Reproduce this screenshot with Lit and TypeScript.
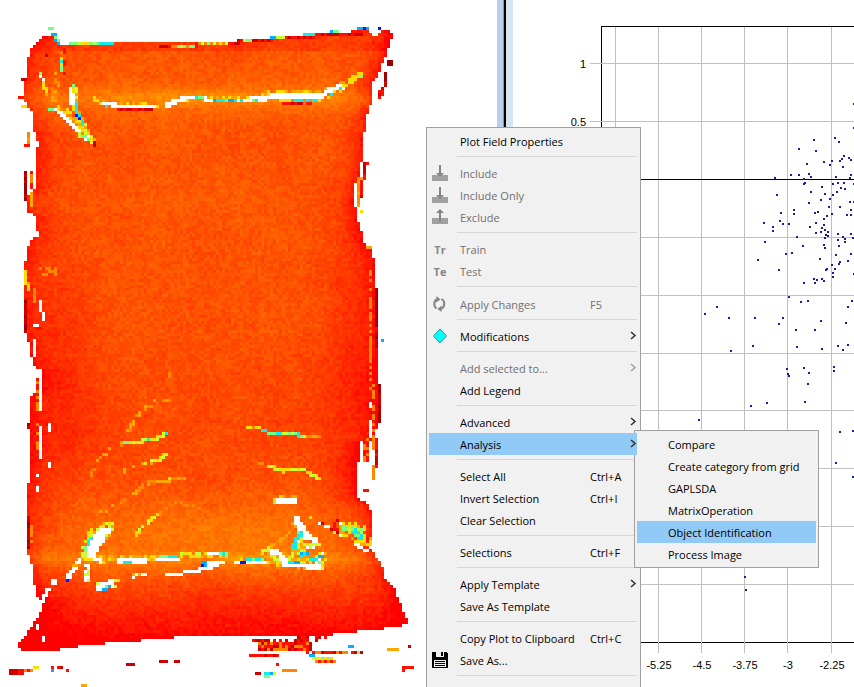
import { LitElement, html, svg, css, nothing } from "lit";
import { customElement } from "lit/decorators.js";
import { classMap } from "lit/directives/class-map.js";

type Point = [number, number];

/* ---------- false-colour image of the bag ---------- */

const CELL = 3;
const COLS = 139;
const ROWS = 226;

const OUTLINE: Point[] = [
  [41, 37], [57, 37], [59, 45], [68, 46], [69, 43], [228, 43], [243, 40], [275, 38], [320, 35], [333, 32],
  [369, 31], [372, 36], [379, 36], [380, 31], [390, 31], [392, 34], [391, 43], [387, 53], [383, 62], [380, 72],
  [373, 83], [372, 100], [368, 110], [365, 128], [363, 143], [363, 153], [362, 165], [358, 178], [354, 186],
  [354, 200], [357, 215], [361, 230], [364, 244], [371, 250], [374, 258], [376, 285], [377, 320], [379, 332],
  [379, 420], [376, 432], [372, 442], [360, 442], [358, 470], [357, 497], [367, 503], [372, 512], [373, 530],
  [368, 545], [376, 556], [382, 565], [385, 578], [394, 588], [400, 603], [406, 617], [411, 621], [401, 627],
  [378, 629], [353, 632], [330, 635], [300, 635], [210, 635], [167, 638], [125, 642], [97, 644], [75, 647],
  [58, 650], [36, 652], [25, 652], [16, 645], [24, 637], [33, 625], [42, 610], [44, 600], [36, 598], [34, 580],
  [31, 562], [27, 550], [27, 485], [31, 478], [31, 395], [43, 390], [43, 372], [33, 365], [28, 340], [25, 330],
  [25, 264], [29, 245], [35, 235], [37, 216], [28, 212], [27, 195], [35, 190], [35, 150], [39, 143], [36, 138],
  [33, 125], [33, 113], [27, 108], [24, 98], [24, 82], [27, 78], [27, 62], [30, 50], [36, 43],
];

const W = "#ffffff";
const YELLOW = "#ffdc00";
const LIME = "#c8ff32";
const GREEN = "#78ff82";
const CYAN = "#14ebe6";
const SKY = "#00afff";
const BLUE = "#0019ff";
const MAROON = "#a00000";
const DARK = "#cd0000";
const RED = "#ff0f00";
const ORANGE = "#ff8700";
const AMBER = "#ffa500";
/* leaves the cell underneath as it is */
const KEEP = "";

interface Stroke {
  colors: string[];
  size: number;
  points: Point[];
}
const s = (colors: string[], size: number, ...points: Point[]): Stroke => ({ colors, size, points });

const STROKES: Stroke[] = [
  // top rim
  s([DARK, RED], 2, [160, 46], [196, 45], [228, 43], [282, 38], [360, 33]),
  s([LIME, GREEN, YELLOW], 2, [69, 43], [97, 43]),
  s([GREEN, CYAN], 2, [97, 43], [112, 43]),
  s([LIME, ORANGE, GREEN], 2, [172, 46], [192, 46]),
  s([ORANGE, LIME, YELLOW, GREEN], 2, [198, 43], [225, 43]),
  s([LIME, GREEN], 2, [244, 41], [250, 40]),
  s([SKY, LIME], 2, [270, 38], [284, 37]),
  s([CYAN, YELLOW], 2, [303, 35], [312, 35]),
  s([SKY, GREEN], 2, [331, 32], [338, 32]),
  s([BLUE, SKY], 3, [357, 29], [367, 29]),
  s([BLUE], 2, [379, 29], [380, 29]),
  s([GREEN], 3, [50, 29], [51, 29]),
  s([SKY], 3, [53, 33], [54, 33]),
  s([GREEN, SKY], 3, [56, 38], [59, 44]),
  // left ear
  s([AMBER, ORANGE, KEEP], 3, [61, 47], [60, 57]),
  s([ORANGE, AMBER, KEEP], 6, [57, 74], [53, 100]),
  s([GREEN, CYAN, YELLOW], 3, [60, 57], [60, 70]),
  s([RED, RED, KEEP], 3, [64, 48], [63, 72]),
  s([DARK, KEEP], 4, [42, 45], [47, 54]),
  s([GREEN, KEEP], 3, [37, 70], [41, 76]),
  s([W], 2, [41, 77], [44, 82]),
  s([RED, AMBER, YELLOW], 3, [43, 82], [47, 94]),
  s([W, W, GREEN], 3, [50, 109], [58, 108]),
  s([YELLOW, AMBER, ORANGE, KEEP], 7, [60, 107], [80, 128], [91, 140]),
  s([W], 3, [59, 111], [68, 121], [80, 134]),
  s([YELLOW, LIME, AMBER], 5, [75, 90], [76, 110], [87, 134], [94, 141]),
  s([GREEN, YELLOW], 2, [74, 86], [74, 96]),
  s([W], 4, [71, 88], [72, 104]),
  s([BLUE, CYAN], 3, [75, 102], [76, 112], [83, 124]),
  s([W, GREEN, LIME], 4, [79, 135], [88, 138]),
  s([DARK], 3, [93, 143], [94, 144]),
  // upper seal
  s([YELLOW, AMBER, KEEP], 4, [94, 98], [108, 104], [160, 106], [192, 97], [214, 99], [252, 98], [272, 93], [322, 93], [362, 74]),
  s([CYAN, YELLOW], 3, [97, 101], [105, 105]),
  s([W], 4, [104, 103], [114, 105]),
  s([W], 4, [114, 107], [155, 107]),
  s([W], 4, [168, 105], [178, 101], [184, 99]),
  s([DARK, RED], 2, [119, 110], [150, 110]),
  s([W], 2, [186, 98], [203, 98], [212, 101]),
  s([CYAN, GREEN], 2, [197, 97], [201, 97]),
  s([W], 4, [211, 101], [236, 101], [257, 99], [274, 98]),
  s([SKY, CYAN, GREEN, W, W], 2, [212, 101], [255, 101]),
  s([W], 6, [273, 97], [322, 97]),
  s([W], 4, [322, 95], [331, 90], [339, 87]),
  s([YELLOW, KEEP, KEEP, CYAN, KEEP], 2, [280, 100], [318, 100], [330, 95], [342, 89]),
  s([W, YELLOW], 2, [342, 87], [352, 82], [362, 73]),
  s([GREEN, YELLOW], 3, [356, 76], [362, 76]),
  s([RED, KEEP, DARK], 2, [283, 103], [312, 103]),
  // creases
  s([ORANGE, KEEP, KEEP], 2, [90, 474], [98, 462]),
  s([AMBER, ORANGE, KEEP], 2, [98, 462], [103, 455], [112, 448], [124, 443]),
  s([LIME, YELLOW, GREEN], 2, [124, 443], [142, 442]),
  s([YELLOW, CYAN, LIME], 2, [143, 439], [156, 439], [165, 434]),
  s([YELLOW, AMBER, KEEP], 2, [125, 471], [141, 464], [151, 462]),
  s([LIME, YELLOW], 2, [151, 461], [158, 461], [166, 453]),
  s([ORANGE, KEEP, AMBER, KEEP], 2, [127, 434], [138, 414], [155, 402], [168, 399]),
  s([YELLOW, AMBER, ORANGE], 2, [157, 480], [170, 480], [183, 479]),
  s([ORANGE, KEEP, AMBER], 2, [98, 513], [118, 505], [133, 496], [144, 485], [156, 480]),
  s([LIME, YELLOW, KEEP], 2, [136, 534], [150, 520], [160, 513]),
  s([ORANGE, KEEP, KEEP], 2, [160, 513], [178, 502], [200, 508]),
  s([AMBER, KEEP], 2, [93, 502], [99, 496]),
  s([ORANGE, KEEP, KEEP], 2, [155, 380], [168, 380], [168, 365]),
  s([YELLOW, ORANGE], 2, [246, 426], [258, 428]),
  s([LIME, CYAN, GREEN], 3, [262, 431], [278, 434], [294, 434], [306, 437]),
  s([AMBER, ORANGE], 2, [306, 437], [318, 437]),
  s([ORANGE, KEEP], 2, [258, 464], [268, 466]),
  s([YELLOW, LIME], 2, [267, 466], [284, 471], [303, 469], [318, 478]),
  // centre highlight
  s([YELLOW, KEEP, AMBER], 4, [277, 497], [294, 497]),
  s([GREEN, CYAN, YELLOW], 4, [274, 501], [296, 503]),
  s([W], 5, [277, 501], [295, 502]),
  // lower seal
  s([YELLOW, AMBER, KEEP], 4, [88, 558], [150, 558], [226, 556], [300, 567], [322, 567]),
  s([YELLOW, AMBER, LIME, KEEP], 12, [86, 556], [94, 537], [108, 529]),
  s([GREEN, CYAN, LIME], 4, [83, 556], [92, 537]),
  s([W], 9, [90, 554], [97, 542], [102, 534]),
  s([W], 6, [100, 533], [109, 530]),
  s([W, W, AMBER, GREEN], 4, [68, 578], [80, 560]),
  s([BLUE], 3, [66, 580], [67, 580]),
  s([W, W, LIME, KEEP], 5, [87, 567], [87, 580]),
  s([YELLOW, W], 3, [92, 559], [104, 562]),
  s([W], 5, [118, 561], [146, 562]),
  s([CYAN, GREEN, LIME], 4, [124, 562], [130, 562]),
  s([CYAN, CYAN, GREEN], 4, [160, 556], [174, 556]),
  s([W], 3, [156, 560], [177, 560]),
  s([YELLOW, LIME, KEEP], 3, [182, 553], [212, 553]),
  s([YELLOW, LIME, KEEP], 6, [98, 585], [119, 583]),
  s([W], 7, [100, 588], [112, 583]),
  s([SKY, GREEN, CYAN], 3, [103, 590], [110, 586]),
  s([W, AMBER], 2, [134, 576], [146, 574]),
  s([W], 2, [166, 574], [200, 572]),
  s([W], 5, [200, 569], [216, 564]),
  s([BLUE, SKY], 4, [203, 563], [205, 564]),
  s([W], 4, [210, 562], [224, 562]),
  s([W], 3, [236, 562], [266, 562]),
  s([W], 2, [208, 554], [218, 554]),
  s([GREEN, CYAN], 3, [219, 553], [226, 555]),
  s([CYAN, LIME, GREEN], 4, [248, 559], [262, 559]),
  s([BLUE], 3, [240, 563], [243, 563]),
  s([YELLOW, AMBER, KEEP], 2, [268, 548], [290, 532]),
  s([YELLOW, LIME, AMBER, KEEP], 9, [266, 551], [284, 560], [318, 566], [322, 556]),
  s([W], 5, [272, 552], [280, 554], [286, 564], [318, 567]),
  s([W, SKY, GREEN], 4, [316, 564], [322, 555]),
  s([YELLOW, LIME, AMBER, KEEP], 8, [294, 520], [304, 536], [312, 541], [296, 550]),
  s([W], 6, [296, 519], [303, 530], [306, 537]),
  s([W], 4, [306, 535], [315, 540]),
  s([W, W, CYAN], 4, [299, 538], [292, 548]),
  s([W, LIME], 3, [306, 548], [318, 545]),
  s([CYAN, GREEN], 4, [298, 532], [301, 536]),
  s([SKY, CYAN, YELLOW, KEEP], 3, [290, 563], [314, 560], [322, 555]),
  s([CYAN, SKY, LIME], 3, [300, 555], [306, 554]),
  s([W, YELLOW, KEEP], 3, [306, 516], [318, 522]),
  s([LIME, DARK, W], 3, [318, 522], [337, 532]),
  s([W], 2, [339, 524], [339, 534]),
  s([AMBER, YELLOW, KEEP], 13, [345, 528], [358, 532], [365, 541]),
  s([LIME, YELLOW, GREEN], 7, [345, 527], [358, 532], [363, 540]),
  s([CYAN, GREEN], 4, [352, 530], [362, 538]),
  s([W], 2, [355, 543], [366, 551]),
  s([RED, DARK, KEEP], 4, [336, 520], [336, 530]),
  // ragged left margin
  s([W], 4, [32, 222], [37, 236]),
  s([W], 2, [40, 300], [40, 311]),
  s([W], 2, [43, 314], [43, 320]),
  s([W, RED], 2, [34, 325], [40, 328]),
  s([W], 2, [34, 340], [34, 356]),
  s([W], 4, [41, 378], [41, 410]),
  s([W], 3, [40, 428], [39, 456]),
  s([W, KEEP], 2, [37, 474], [37, 504]),
  s([W], 2, [50, 424], [50, 429]),
  s([W], 2, [50, 462], [50, 467]),
  s([DARK, MAROON], 3, [25, 172], [25, 200]),
  s([DARK, MAROON], 3, [25, 300], [25, 332]),
  s([ORANGE, RED], 3, [32, 172], [32, 186]),
  s([AMBER, ORANGE], 3, [31, 192], [30, 206]),
  s([AMBER, YELLOW], 3, [25, 272], [28, 290]),
  s([ORANGE, KEEP], 8, [44, 271], [54, 271]),
  s([ORANGE], 3, [33, 290], [33, 300]),
  s([DARK, MAROON], 3, [28, 518], [28, 548]),
  s([ORANGE, KEEP], 3, [32, 525], [32, 560]),
  s([ORANGE, RED], 4, [37, 380], [37, 450]),
  s([MAROON, DARK], 3, [28, 423], [28, 427]),
  s([AMBER, ORANGE], 4, [29, 135], [29, 142]),
  s([RED], 3, [26, 146], [27, 146]),
  s([RED], 3, [20, 98], [22, 98]),
  s([YELLOW], 3, [23, 105], [24, 105]),
  s([DARK], 3, [23, 79], [24, 80]),
  s([W], 3, [44, 597], [48, 588]),
  s([W], 4, [52, 582], [56, 582]),
  s([W], 2, [37, 625], [37, 627]),
  s([W], 2, [43, 636], [43, 639]),
  // ragged right margin
  s([DARK, MAROON], 4, [386, 74], [386, 84]),
  s([DARK, RED], 4, [382, 88], [380, 98]),
  s([MAROON], 4, [389, 63], [391, 63]),
  s([W], 2, [361, 164], [361, 174]),
  s([W], 2, [355, 188], [355, 205]),
  s([RED, DARK], 3, [366, 162], [362, 185], [361, 197]),
  s([ORANGE, AMBER], 3, [360, 178], [358, 204]),
  s([YELLOW], 3, [360, 211], [361, 211]),
  s([AMBER], 3, [368, 246], [370, 246]),
  s([MAROON], 3, [377, 288], [377, 325]),
  s([ORANGE, KEEP], 3, [371, 262], [371, 390]),
  s([DARK, MAROON], 3, [377, 334], [377, 346]),
  s([SKY], 3, [381, 340], [383, 340]),
  s([DARK, MAROON], 3, [380, 384], [380, 420]),
  s([ORANGE, KEEP], 3, [373, 385], [373, 440]),
  s([W], 2, [369, 403], [369, 405]),
  s([W], 2, [370, 422], [370, 436]),
  s([W], 5, [361, 442], [362, 498]),
  s([RED, ORANGE], 5, [365, 440], [366, 459]),
  s([DARK, RED], 4, [377, 440], [377, 465]),
  s([ORANGE], 3, [374, 440], [374, 448]),
  s([ORANGE], 3, [374, 466], [374, 478]),
  s([RED], 3, [364, 490], [366, 490]),
  // reflections under the bag
  s([DARK, RED, W], 5, [254, 640], [300, 640], [324, 637]),
  s([RED, DARK, ORANGE], 7, [260, 647], [310, 646]),
  s([DARK, RED], 5, [252, 656], [276, 656]),
  s([DARK, RED, ORANGE, KEEP], 3, [306, 652], [360, 652]),
  s([W], 2, [262, 638], [292, 639]),
  s([LIME, GREEN, YELLOW], 3, [312, 657], [330, 657]),
  s([RED, ORANGE], 3, [315, 661], [334, 661]),
  s([SKY], 3, [349, 645], [351, 645]),
  s([GREEN], 3, [357, 652], [359, 652]),
  s([SKY], 3, [311, 656], [312, 656]),
  s([RED], 3, [277, 664], [278, 664]),
  s([ORANGE], 3, [284, 669], [294, 669]),
  s([CYAN, SKY, LIME], 3, [264, 672], [275, 672]),
  s([DARK], 3, [257, 672], [259, 672]),
  s([GREEN], 3, [265, 675], [267, 675]),
  s([AMBER], 3, [389, 648], [390, 648]),
  s([AMBER], 3, [395, 648], [396, 648]),
  s([DARK], 3, [408, 645], [410, 645]),
  s([RED], 3, [403, 669], [412, 667]),
  s([DARK], 4, [12, 672], [16, 672]),
  s([RED], 4, [20, 672], [21, 672]),
  s([RED, ORANGE], 3, [25, 669], [30, 669]),
  s([YELLOW], 4, [36, 667], [37, 667]),
  s([SKY], 3, [52, 669], [53, 669]),
  s([RED], 3, [52, 666], [53, 666]),
  s([DARK, RED], 4, [58, 667], [61, 667]),
  s([RED], 3, [66, 669], [67, 669]),
  s([DARK], 4, [128, 664], [132, 664]),
  s([DARK, RED], 3, [160, 661], [167, 661]),
  s([DARK], 3, [176, 661], [178, 661]),
  s([AMBER], 3, [82, 684], [84, 684]),
];

const hash = (a: number, b: number, k = 0): number => {
  let n = (a * 374761393 + b * 668265263 + k * 2147483647) | 0;
  n = Math.imul(n ^ (n >>> 13), 1274126177);
  n ^= n >>> 16;
  return (n >>> 0) / 4294967296;
};

const inside = (x: number, y: number, ring: Point[]): boolean => {
  let hit = false;
  for (let i = 0, j = ring.length - 1; i < ring.length; j = i++) {
    const [xi, yi] = ring[i];
    const [xj, yj] = ring[j];
    if (yi > y !== yj > y && x < ((xj - xi) * (y - yi)) / (yj - yi) + xi) hit = !hit;
  }
  return hit;
};

const bell = (d: number, width: number): number => Math.exp(-(d * d) / (2 * width * width));

const smoothNoise = (x: number, y: number): number => {
  const x0 = Math.floor(x);
  const y0 = Math.floor(y);
  const fx = x - x0;
  const fy = y - y0;
  const top = hash(x0, y0, 3) * (1 - fx) + hash(x0 + 1, y0, 3) * fx;
  const low = hash(x0, y0 + 1, 3) * (1 - fx) + hash(x0 + 1, y0 + 1, 3) * fx;
  return top * (1 - fy) + low * fy - 0.5;
};

function buildHeatmap(): Map<string, string> {
  const grid: (string | undefined)[][] = [];
  for (let r = 0; r < ROWS + 4; r++) {
    const y = r * CELL + 1.5;
    const row: (string | undefined)[] = new Array(COLS).fill(undefined);
    const mask = row.map((_, c) => inside(c * CELL + 1.5, y, OUTLINE));
    const left = mask.indexOf(true) * CELL;
    const right = mask.lastIndexOf(true) * CELL;
    for (let c = 0; c < COLS; c++) {
      if (!mask[c]) continue;
      const x = c * CELL;
      const toLeft = x - left;
      const toRight = right - x;
      let g = 84;
      g -= 55 * Math.exp(-toLeft / 16) + 62 * Math.exp(-toRight / 12);
      g += 22 * bell(y - 100, 14) + 38 * bell(y - 98, 5) * bell(x - 220, 110);
      g += 32 * bell(y - 540, 28) * bell(x - 220, 150) + 26 * bell(y - 559, 5);
      g -= 26 * bell(x - 62, 24) * bell(y - 370, 80);
      g -= 30 * bell(x - 350, 22) * bell(y - 370, 90);
      g -= 12 * bell(y - 430, 60);
      if (y > 568) g -= (y - 568) * 1.15;
      if (y < 50) g -= 25;
      g += 14 * smoothNoise(x / 40, y / 40) + 12 * smoothNoise(x / 9, y / 9) + 30 * (hash(c, r) - 0.5);
      g = Math.max(0, Math.min(170, Math.round(g / 7) * 7));
      row[c] = `rgb(255,${g},0)`;
    }
    grid.push(row);
  }

  STROKES.forEach(({ colors, size, points }, index) => {
    const reach = Math.max(size / 2, 1.5);
    for (let i = 0; i + 1 < points.length; i++) {
      const [x1, y1] = points[i];
      const [x2, y2] = points[i + 1];
      const steps = Math.max(1, Math.ceil(Math.hypot(x2 - x1, y2 - y1)));
      for (let t = 0; t <= steps; t++) {
        const px = x1 + ((x2 - x1) * t) / steps;
        const py = y1 + ((y2 - y1) * t) / steps;
        const c0 = Math.floor((px - reach + 1.5) / CELL);
        const c1 = Math.max(c0, Math.ceil((px + reach - 1.5) / CELL) - 1);
        const r0 = Math.floor((py - reach + 1.5) / CELL);
        const r1 = Math.max(r0, Math.ceil((py + reach - 1.5) / CELL) - 1);
        for (let r = r0; r <= r1; r++) {
          for (let c = c0; c <= c1; c++) {
            if (r < 0 || c < 0 || r >= grid.length || c >= COLS) continue;
            const color = colors[Math.floor(hash(c, r, index + 7) * colors.length)];
            if (color !== KEEP) grid[r][c] = color;
          }
        }
      }
    }
  });

  const paths = new Map<string, string>();
  grid.forEach((row, r) => {
    for (let c = 0; c < COLS; ) {
      const color = row[c];
      let end = c + 1;
      while (end < COLS && row[end] === color) end++;
      if (color) {
        const w = (end - c) * CELL;
        paths.set(color, `${paths.get(color) ?? ""}M${c * CELL} ${r * CELL}h${w}v${CELL}h${-w}z`);
      }
      c = end;
    }
  });
  return paths;
}

@customElement("heat-image")
export class HeatImage extends LitElement {
  static styles = css`
    :host { display: block; overflow: hidden; background: #fff; }
    .canvas { display: block; width: 100%; height: 100%; }
  `;
  private paths = [...buildHeatmap()];
  render() {
    return html`<svg class="canvas" role="img" aria-label="False-colour image" shape-rendering="crispEdges">
      ${this.paths.map(([fill, d]) => svg`<path fill=${fill} d=${d}></path>`)}
    </svg>`;
  }
}

/* ---------- scatter plot ---------- */

const GRID_X = [102, 145, 188, 231, 274, 318];
const GRID_Y = [63, 121, 237, 295, 353, 410, 468, 526, 584];
const LABELS_X: [number, string][] = [[145, "-5.25"], [188, "-4.5"], [231, "-3.75"], [274, "-3"], [318, "-2.25"]];
const LABELS_Y: [number, string][] = [[63, "1"], [121, "0.5"]];

/* dense cloud, in thirds of a pixel from its own corner */
const CLOUD: Point[] = [
  [372, 30], [435, 24], [447, 36], [327, 57], [378, 63], [351, 102], [402, 96], [420, 105], [426, 93], [450, 93],
  [456, 87], [462, 78], [477, 84], [483, 90], [459, 111], [303, 135], [327, 135], [357, 132], [363, 141], [342, 147],
  [438, 141], [483, 135], [480, 144], [255, 144], [345, 159], [342, 162], [429, 162], [444, 159], [462, 159],
  [492, 162], [396, 171], [453, 174], [465, 177], [363, 186], [441, 186], [405, 192], [429, 195], [261, 195],
  [393, 210], [420, 207], [357, 219], [480, 216], [492, 216], [417, 231], [450, 231], [312, 240], [483, 240],
  [273, 249], [312, 252], [375, 249], [384, 246], [426, 252], [411, 258], [471, 255], [483, 255], [402, 267],
  [270, 273], [222, 279], [279, 282], [297, 282], [378, 279], [249, 291], [249, 303], [360, 291], [402, 285],
  [396, 294], [405, 300], [393, 306], [414, 306], [378, 309], [408, 315], [414, 318], [405, 324], [321, 321],
  [444, 312], [483, 312], [459, 321], [465, 327], [444, 330], [465, 336], [489, 324], [225, 336], [339, 348],
  [402, 345], [405, 354], [447, 348], [288, 372], [306, 369], [438, 375], [483, 372], [204, 390], [390, 387],
  [450, 396], [447, 402], [426, 405], [474, 393], [267, 420], [411, 417], [408, 420], [435, 417], [429, 429],
  [429, 441], [492, 432], [372, 447], [381, 450], [396, 447], [402, 453], [342, 459], [375, 459], [297, 501],
  [333, 516], [354, 513], [486, 513], [81, 531], [474, 531],
];

const OUTLIERS: Point[] = [
  [192, 314], [216, 318], [242, 318], [270, 318], [266, 324], [283, 330], [218, 351], [240, 346], [284, 347],
  [274, 369], [275, 374], [276, 376], [291, 368], [296, 373], [295, 384], [302, 330], [308, 321], [309, 349],
  [321, 367], [321, 371], [325, 346], [335, 345], [333, 323], [330, 350], [254, 403], [238, 406], [292, 402],
  [186, 420], [327, 432], [340, 431], [323, 463], [340, 477], [232, 577], [233, 590], [341, 104], [341, 128],
];

@customElement("scatter-plot")
export class ScatterPlot extends LitElement {
  static styles = css`
    :host { display: block; overflow: hidden; background: #fff; }
    .plot { display: block; width: 100%; height: 100%; font: 11px "Liberation Sans", Arial, sans-serif; fill: #000; }
    .grid { fill: #c0c0c0; }
    .frame { fill: #000; }
    .points { fill: #1c1c9c; }
    .x { text-anchor: middle; }
    .y { text-anchor: end; }
  `;
  render() {
    return html`<svg class="plot" role="img" aria-label="Scatter plot">
      <g class="frame" shape-rendering="crispEdges">
        <rect x="88" y="26" width="100%" height="1"></rect>
        <rect x="88" y="642" width="100%" height="1"></rect>
        <rect x="88" y="26" width="1" height="617"></rect>
      </g>
      <g class="grid" shape-rendering="crispEdges">
        ${GRID_X.map((x) => svg`<rect x=${x} y="27" width="1" height="626"></rect>`)}
        ${GRID_Y.map((y) => svg`<rect x="77" y=${y} width="100%" height="1"></rect>`)}
      </g>
      <rect class="frame" x="77" y="179" width="100%" height="1"></rect>
      <g class="points" shape-rendering="crispEdges">
        ${CLOUD.map(([x, y]) => svg`<rect x=${Math.round(x / 3) + 176} y=${Math.round(y / 3) + 129} width="2" height="2"></rect>`)}
        ${OUTLIERS.map(([x, y]) => svg`<rect x=${x - 1} y=${y - 1} width="2" height="2"></rect>`)}
      </g>
      ${LABELS_X.map(([x, t]) => svg`<text class="x" x=${x + 1} y="669">${t}</text>`)}
      ${LABELS_Y.map(([y, t]) => svg`<text class="y" x="73" y=${y + 5}>${t}</text>`)}
    </svg>`;
  }
}

/* ---------- context menu ---------- */

interface Item {
  label: string;
  icon?: "in" | "out" | "Tr" | "Te" | "refresh" | "diamond" | "disk";
  keys?: string;
  disabled?: boolean;
  more?: boolean;
  active?: boolean;
  children?: Item[];
}

const GROUPS: Item[][] = [
  [{ label: "Plot Field Properties" }],
  [
    { label: "Include", icon: "in", disabled: true },
    { label: "Include Only", icon: "in", disabled: true },
    { label: "Exclude", icon: "out", disabled: true },
  ],
  [
    { label: "Train", icon: "Tr", disabled: true },
    { label: "Test", icon: "Te", disabled: true },
  ],
  [{ label: "Apply Changes", icon: "refresh", keys: "F5", disabled: true }],
  [{ label: "Modifications", icon: "diamond", more: true }],
  [{ label: "Add selected to...", disabled: true, more: true }, { label: "Add Legend" }],
  [
    { label: "Advanced", more: true },
    {
      label: "Analysis",
      more: true,
      active: true,
      children: [
        { label: "Compare" },
        { label: "Create category from grid" },
        { label: "GAPLSDA" },
        { label: "MatrixOperation" },
        { label: "Object Identification", active: true },
        { label: "Process Image" },
      ],
    },
  ],
  [
    { label: "Select All", keys: "Ctrl+A" },
    { label: "Invert Selection", keys: "Ctrl+I" },
    { label: "Clear Selection" },
  ],
  [{ label: "Selections", keys: "Ctrl+F" }],
  [{ label: "Apply Template", more: true }, { label: "Save As Template" }],
  [
    { label: "Copy Plot to Clipboard", keys: "Ctrl+C" },
    { label: "Save As...", icon: "disk" },
  ],
  [],
];

const drawIcon = (icon?: Item["icon"]) => {
  switch (icon) {
    case "in":
      return html`<svg width="16" height="16" aria-hidden="true">
        <path fill="#a0a0a0" d="M0 10h16v6H0z"></path>
        <path fill="#858585" d="M7 0h2v8h3l-4 4-4-4h3z"></path>
      </svg>`;
    case "out":
      return html`<svg width="16" height="16" aria-hidden="true">
        <path fill="#a0a0a0" d="M0 9h16v6H0z"></path>
        <path fill="#858585" d="M8 0l4 4H9v9H7V4H4z"></path>
      </svg>`;
    case "Tr":
    case "Te":
      return html`<b>${icon}</b>`;
    case "refresh":
      return html`<svg width="16" height="16" aria-hidden="true">
        <g fill="none" stroke="#858585" stroke-width="2">
          <path d="M4.500 12.500A5.500 5.500 0 0 1 5.500 3"></path>
          <path d="M9.500 3A5.500 5.500 0 0 1 8.500 13"></path>
        </g>
        <path fill="#858585" d="M4.500 0l4 3.500-4.500 3zM9.500 9.500v6.500L5.500 13z"></path>
      </svg>`;
    case "diamond":
      return html`<svg width="16" height="16" aria-hidden="true">
        <path fill="#00ffff" stroke="#2a9a9a" stroke-linejoin="round" d="M8 1l6.500 7L8 15 1.500 8z"></path>
      </svg>`;
    case "disk":
      return html`<svg width="16" height="16" aria-hidden="true" shape-rendering="crispEdges">
        <path d="M0 0h14l2 2v14H0z"></path>
        <path fill="#f1f1f1" d="M4 0h8v5H4zM2 8h12v7H2z"></path>
        <path d="M9 0h2v4H9zM3 9h10v1H3zM3 11h10v1H3zM3 13h10v1H3z"></path>
      </svg>`;
    default:
      return nothing;
  }
};

@customElement("context-menu")
export class ContextMenu extends LitElement {
  static styles = css`
    :host { display: block; font: 11px/20px "Open Sans", "Noto Sans", sans-serif; }
    ul { list-style: none; margin: 0; padding: 2px; box-sizing: border-box; background: #f1f1f1; border: 1px solid #a0a0a0; }
    .root { padding: 2px 3px 24px 2px; }
    li { position: relative; }
    .item {
      position: relative; display: grid; grid-template-columns: 31px 130px 1fr 8px; align-items: center;
      width: 100%; height: 22px; padding: 0; border: 0; background: none;
      font: inherit; color: #000; text-align: left; white-space: nowrap;
    }
    .item:disabled { color: #707070; }
    .item.tall { height: 23px; }
    .item.active { z-index: 2; background: #91c9f7; }
    .text, b { padding-top: 2px; }
    .icon { display: flex; justify-content: center; width: 22px; color: #858585; }
    .chevron { fill: none; stroke: #303030; stroke-width: 1.5; }
    .item:disabled .chevron { stroke: #a0a0a0; }
    .rule { height: 1px; margin: 4px 0 5px 28px; background: #d7d7d7; }
    .sub { position: absolute; z-index: 1; top: -3px; left: calc(100% - 3px); width: 185px; }
  `;
  private item(item: Item): unknown {
    return html`<li role="none">
      <button
        role="menuitem"
        class=${classMap({ item: true, active: !!item.active, tall: item.icon === "refresh" })}
        ?disabled=${item.disabled}
      >
        <span class="icon">${drawIcon(item.icon)}</span>
        <span class="text">${item.label}</span>
        <span class="text">${item.keys ?? nothing}</span>
        ${item.more
          ? html`<svg width="8" height="10" aria-hidden="true"><path class="chevron" d="M2 1l4 3.500-4 3.500"></path></svg>`
          : nothing}
      </button>
      ${item.children
        ? html`<ul class="sub" role="menu" aria-label=${item.label}>${item.children.map((c) => this.item(c))}</ul>`
        : nothing}
    </li>`;
  }
  render() {
    return html`<ul class="root" role="menu">
      ${GROUPS.map(
        (group, i) => html`${i ? html`<li class="rule" role="separator"></li>` : nothing}${group.map((it) => this.item(it))}`,
      )}
    </ul>`;
  }
}

@customElement("app-root")
export class AppRoot extends LitElement {
  static styles = css`
    :host { display: block; position: relative; height: 100vh; overflow: hidden; background: #fff; }
    .panes { display: grid; grid-template-columns: 497px 16px 1fr; height: 100%; }
    .splitter { display: grid; grid-template-columns: 6px 1px 2px 7px; }
    .near { background: #b9d1ea; }
    .glow { background: #3cb4dc; }
    .bar { background: #000; }
    .far { background: #d7e4f2; }
    .popup { position: absolute; left: 426px; top: 127px; width: 215px; }
  `;
  render() {
    return html`
      <main class="panes">
        <heat-image></heat-image>
        <div class="splitter">
          <div class="near"></div>
          <div class="glow"></div>
          <div class="bar"></div>
          <div class="far"></div>
        </div>
        <scatter-plot></scatter-plot>
      </main>
      <context-menu class="popup"></context-menu>
    `;
  }
}
